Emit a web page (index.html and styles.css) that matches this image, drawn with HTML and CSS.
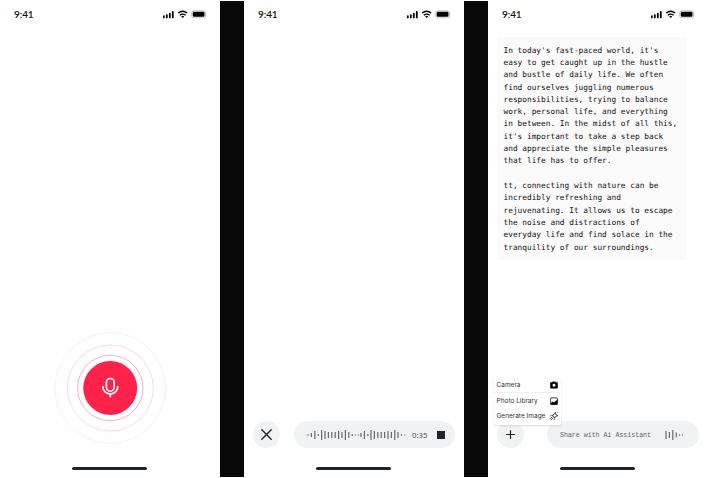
FILE: index.html
```
<!DOCTYPE html>
<html lang="en">
<head>
<meta charset="utf-8">
<title>Voice assistant</title>
<link rel="stylesheet" href="styles.css">
</head>
<body>
<svg class="defs" aria-hidden="true">
  <symbol id="status" viewBox="0 0 46 10">
    <path d="M1.8 8.4V7.2M4.8 8.4V6.2M7.8 8.4V4.6M10.8 8.4V2.8" stroke="#000" stroke-width="1.8" stroke-linecap="round"/>
    <g fill="none" stroke="#000" stroke-width="1.4"><path d="M16.2 4Q20.7 .6 25.2 4M17.8 6.2Q20.7 4 23.6 6.2"/></g>
    <path d="M19.2 7.4Q20.7 6.3 22.2 7.4L20.7 9z"/>
    <rect x="29.6" y="1.8" width="14" height="7" rx="2" fill="none" stroke="#aaa" stroke-width=".7"/>
    <rect x="30.7" y="2.8" width="11.8" height="5" rx="1.2"/><path d="M44.6 4.2v2.2q1-1.1 0-2.2" fill="#aaa"/>
  </symbol>
</svg>
<main class="screens">
  <section class="screen">
    <header class="status"><span>9:41</span><svg><use href="#status"/></svg></header>
    <div class="recorder">
      <svg viewBox="0 0 114 114">
        <g fill="none" stroke="#ff234b"><circle cx="57.3" cy="57" r="55.3" opacity=".09"/><circle cx="57.3" cy="57" r="43" opacity=".18"/><circle cx="57.3" cy="57" r="32.7" opacity=".36"/></g>
        <circle cx="57.2" cy="57" r="27" fill="#ff234b"/>
        <g fill="none" stroke="#fff" stroke-width="1.6" stroke-linecap="round"><rect x="53.4" y="47.5" width="7.8" height="12.6" rx="3.9"/><path d="M49.9 55.5v.5a7.4 7 0 0 0 14.8 0v-.5M57.3 63v2.8"/></g>
      </svg>
    </div>
    <div class="home"></div>
  </section>
  <section class="screen">
    <header class="status"><span>9:41</span><svg><use href="#status"/></svg></header>
    <div class="controls">
      <button class="round" aria-label="Cancel"><svg viewBox="0 0 27 27"><path d="M8.8 8.8l9.4 9.4m0-9.4l-9.4 9.4" stroke="#20252c" stroke-width="1.4" stroke-linecap="round"/></svg></button>
      <div class="pill">
        <svg class="wave" viewBox="0 0 100 14"><path d="M1 6.2v1.6M4.4 5v4M7.8 3v8M11.2 6v2M14.6 2v10M18 3v8M21.4 4v6M24.8 4v6M28.2 4v6M31.6 3v8M35 4v6M38.4 2v10M41.8 4v6M45.2 6v2M48.5 6.5v1M51.5 6.5v1M54 5v4M57.4 3v8M60.8 6v2M64 2v10M67.4 3v8M70.8 4v6M74.2 4v6M77.6 4v6M81 3v8M84.4 4v6M87.8 2v10M91 4v6M94.4 6.2v1.6M97.8 6.5v1"/></svg>
        <span class="time">0:35</span><span class="stop"></span>
      </div>
    </div>
    <div class="home"></div>
  </section>
  <section class="screen">
    <header class="status"><span>9:41</span><svg><use href="#status"/></svg></header>
    <article class="note"><p>In today's fast-paced world, it's
easy to get caught up in the hustle
and bustle of daily life. We often
find ourselves juggling numerous
responsibilities, trying to balance
work, personal life, and everything
in between. In the midst of all this,
it's important to take a step back
and appreciate the simple pleasures
that life has to offer.</p><p>tt, connecting with nature can be
incredibly refreshing and
rejuvenating. It allows us to escape
the noise and distractions of
everyday life and find solace in the
tranquility of our surroundings.</p></article>
    <div class="controls assistant">
      <button class="round" aria-label="Add"><svg viewBox="0 0 27 27"><path d="M9.5 13.5h8m-4-4v8" stroke="#20252c" stroke-width="1.2" stroke-linecap="round"/></svg></button>
      <div class="pill"><span class="prompt">Share with Ai Assistant</span><svg class="voice" viewBox="0 0 20 14"><path d="M1 3v8M4.4 4v6M7.8 2v10M11.2 4.5v5M14.6 6.2v1.6M17.5 6.5v1"/></svg></div>
      <div class="menu">
        <div class="item"><span>Camera</span><svg viewBox="0 0 10 10"><path fill-rule="evenodd" d="M3 2.3l.8-.9h2.4l.8.9h1q.8 0 .8.8v4.6q0 .8-.8.8H2q-.8 0-.8-.8V3.1q0-.8.8-.8zM5 3.8a1.5 1.5 0 1 0 .01 0z"/></svg></div>
        <div class="item"><span>Photo Library</span><svg viewBox="0 0 10 10"><rect x="1.6" y="1.9" width="6.8" height="6.6" rx=".5" fill="none" stroke="#111" stroke-width=".8"/><path d="M1.6 8.5V7.2L3.8 5.6l1.1.8 3.5-3v5.1z"/></svg></div>
        <div class="item"><span>Generate Image</span><svg viewBox="0 0 10 10"><path d="M6.4 1.4l.3 2.2 2.1 1.1-2.2.7-1 2.1-.8-2.2-2.2-.8 2.3-.9zM3.2 5.7L1.2 7.7l1 1 2.2-2.2M5.6 8.1l-.9 1M2 4.3l-.9.9M8.8 1.4l-.7.7" fill="none" stroke="#111" stroke-width=".7"/></svg></div>
      </div>
    </div>
    <div class="home"></div>
  </section>
</main>
</body>
</html>
```
FILE: styles.css
```
* { box-sizing: border-box; }
body { margin: 0; background: #fff; font-family: "Liberation Sans", sans-serif; color: #111; }
.defs { display: none; }
.screens { display: grid; grid-template-columns: repeat(3, 220px); gap: 24px; width: 708px; height: 476px; margin-top: 1px; background: linear-gradient(90deg, #090909 488px, #fff 488px); }
.screen { display: flex; flex-direction: column; background: #fff; height: 477px; }
.status { display: flex; justify-content: space-between; align-items: center; flex: none; height: 26px; padding: 0 12.5px 0 14px; font: 600 10px Lato, sans-serif; letter-spacing: -.1px; }
.status svg { width: 46px; height: 10px; }
.recorder { margin: auto auto 22px 53px; height: 114px; }
.recorder svg { display: block; width: 114px; height: 114px; }
.home { flex: none; width: 75px; height: 3px; margin: 0 0 8px 72px; border-radius: 2px; background: #20252c; }
.controls { position: relative; display: flex; gap: 14px; margin: auto 9px 19px; height: 27px; }
.round { display: block; flex: none; width: 27px; height: 27px; padding: 0; border: 0; border-radius: 50%; background: #f1f2f4; }
.round svg { display: block; width: 27px; height: 27px; }
.pill { display: flex; align-items: center; width: 160.5px; height: 27px; border-radius: 14px; background: #f1f2f4; }
.wave { width: 100px; height: 14px; margin-left: 13px; }
.wave path, .voice path { stroke: #66696d; stroke-width: 1.2; }
.time { margin: 1px 0 0 5px; font: 7.8px "Noto Sans", sans-serif; color: #555; }
.stop { width: 8px; height: 8px; margin-left: 9.5px; background: #20252c; }
.note { flex: none; width: 190px; height: 223px; margin: 10px 0 0 9px; padding: 7.6px 6.5px 0; background: #fafafa; font: 7.8px/12.32px "DejaVu Sans Mono", monospace; white-space: pre; }
.note p { margin: 0 0 12.3px; }
.assistant { gap: 23px; margin-right: 0; }
.assistant .pill { width: 152px; }
.prompt { margin: 2px 0 0 13px; font: 6.6px "Liberation Mono", monospace; color: #666; }
.voice { width: 20px; height: 14px; margin-left: 13.5px; }
.menu { position: absolute; left: -3px; bottom: 23px; width: 67px; height: 47px; background: #fff; box-shadow: 0 1px 2px #0002; border-radius: 1px; }
.item { display: flex; align-items: center; justify-content: space-between; height: 15.5px; padding: 0 2px 0 2.5px; font: 6.5px Inter, sans-serif; color: #333; white-space: nowrap; }
.item:first-child { height: 15px; border-bottom: 1px solid #f0f0f0; }
.item svg { width: 10px; height: 10px; }
```
